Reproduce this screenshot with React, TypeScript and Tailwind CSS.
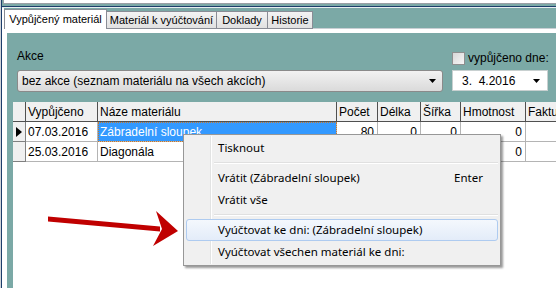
import React from "react";

const cols = [
  { w: 72, label: "Vypůjčeno" },
  { w: 239, label: "Náze materiálu" },
  { w: 41, label: "Počet" },
  { w: 43, label: "Délka" },
  { w: 40, label: "Šířka" },
  { w: 65, label: "Hmotnost" },
  { w: 70, label: "Fakturováno" },
];

const rows = [
  ["07.03.2016", "Zábradelní sloupek", "80", "0", "0", "0", ""],
  ["25.03.2016", "Diagonála", "0", "0", "0", "0", ""],
];

function DownArrow() {
  return (
    <svg width="8" height="4" viewBox="0 0 8 4" className="shrink-0">
      <path d="M0 0 L7 0 L3.5 4 Z" fill="#000" />
    </svg>
  );
}

function MenuItem({ label, shortcut, hot }: { label: string; shortcut?: string; hot?: boolean }) {
  return (
    <div className="h-[22px] px-[2px]">
      <div
        className={
          "h-full flex items-center rounded-[3px] border " +
          (hot
            ? "border-[#aecbf0] bg-gradient-to-b from-[#f4f8fd] to-[#e3ecf9]"
            : "border-transparent")
        }
      >
        <span className="pl-[31px] flex-1">{label}</span>
        {shortcut && <span className="w-[43px]">{shortcut}</span>}
      </div>
    </div>
  );
}

function Sep() {
  return (
    <div className="h-[8px] flex flex-col justify-center pl-[30px] pr-[2px]">
      <div className="h-[1px] bg-[#e0e0e0]" />
      <div className="h-[1px] bg-white" />
    </div>
  );
}

export default function App() {
  return (
    <div className="relative w-[556px] h-[288px] overflow-hidden bg-[#7ba9a6] font-['Liberation_Sans',Arial,sans-serif] text-[12px] text-black flex">
      <div className="w-[1px] shrink-0 bg-[#d0d4d8]" />
      <div className="w-[1px] shrink-0 bg-[#1d3e6b]" />
      <div className="flex-1 min-w-0 flex flex-col">
        {/* top strip */}
        <div className="h-[6px] shrink-0 pl-[1px]">
          <div className="h-[4px] bg-white border-b border-l border-[#9aa0a6]" />
        </div>
        <div className="h-[1px] shrink-0 bg-[#1d3e6b]" />
        <div className="h-[1px] shrink-0 bg-[#e8eef0]" />
        <div className="flex-1 min-h-0 flex">
          <div className="w-[2px] shrink-0 bg-white" />
          <div className="flex-1 min-w-0 flex flex-col">
            {/* tab strip */}
            <div className="h-[21px] shrink-0 flex items-end text-[11px]">
              <div className="h-[20px] w-[103px] shrink-0 bg-white border-t border-l border-r border-[#898c95] flex items-center justify-center">
                Vypůjčený materiál
              </div>
              <div className="h-[18px] w-[111px] shrink-0 -ml-[1px] bg-gradient-to-b from-[#f3f3f3] to-[#e1e1e1] border border-[#898c95] flex items-center justify-center">
                Materiál k vyúčtování
              </div>
              <div className="h-[18px] w-[52px] shrink-0 -ml-[1px] bg-gradient-to-b from-[#f3f3f3] to-[#e1e1e1] border border-[#898c95] flex items-center justify-center">
                Doklady
              </div>
              <div className="h-[18px] w-[46px] shrink-0 -ml-[1px] bg-gradient-to-b from-[#f3f3f3] to-[#e1e1e1] border border-[#898c95] flex items-center justify-center">
                Historie
              </div>
              <div className="flex-1 h-[1px] bg-[#c9cfd4]" />
            </div>
            {/* tab page */}
            <div className="flex-1 min-h-0 bg-white pt-[4px] pl-[3px] flex">
              <div className="flex-1 min-w-0 bg-[#7ba9a6] flex flex-col">
                <div className="flex pt-[16px] shrink-0">
                  <div className="ml-[10px] w-[426px] shrink-0 flex flex-col">
                    <div className="h-[14px] leading-[14px]">Akce</div>
                    <div className="mt-[7px] h-[22px] rounded-[3px] border border-[#8a8a8a] bg-gradient-to-b from-[#f2f2f2] to-[#dadada] flex items-center pl-[4px] pr-[5px]">
                      <span className="flex-1">bez akce (seznam materiálu na všech akcích)</span>
                      <DownArrow />
                    </div>
                  </div>
                  <div className="ml-[9px] w-[96px] shrink-0 flex flex-col">
                    <div className="mt-[3px] h-[13px] flex items-center whitespace-nowrap">
                      <div className="w-[13px] h-[13px] shrink-0 border border-[#8e8f8f] bg-gradient-to-br from-[#d8d8d8] to-[#f6f6f6]" />
                      <span className="ml-[3px] leading-[13px]">vypůjčeno dne:</span>
                    </div>
                    <div className="mt-[5px] h-[21px] bg-white border border-[#c8d0d0] flex items-center pl-[9px] pr-[6px]">
                      <span className="flex-1 whitespace-pre">3.  4.2016</span>
                      <DownArrow />
                    </div>
                  </div>
                </div>
                {/* grid */}
                <div className="mt-[10px] ml-[6px] flex-1 min-w-0 bg-white flex flex-col overflow-hidden">
                  <div className="h-[20px] flex shrink-0">
                    <div className="w-[13px] shrink-0 bg-[#f0f0f0] border-r border-b border-[#505050]" />
                    {cols.map((c) => (
                      <div
                        key={c.label}
                        style={{ width: c.w }}
                        className="shrink-0 bg-[#f0f0f0] border-r border-b border-[#505050] pl-[2px] flex items-center overflow-hidden whitespace-nowrap"
                      >
                        {c.label}
                      </div>
                    ))}
                  </div>
                  {rows.map((r, ri) => (
                    <div key={ri} className="h-[20px] flex shrink-0">
                      <div className="w-[13px] shrink-0 bg-[#f0f0f0] border-r border-b border-[#808080] flex items-center pl-[3px]">
                        {ri === 0 && (
                          <svg width="6" height="10" viewBox="0 0 6 10">
                            <path d="M0 0 L6 5 L0 10 Z" fill="#000" />
                          </svg>
                        )}
                      </div>
                      {cols.map((c, ci) => {
                        const sel = ri === 0 && ci === 1;
                        const num = ci >= 2;
                        return (
                          <div
                            key={ci}
                            style={{ width: c.w }}
                            className={
                              "shrink-0 border-r border-b border-[#b4b4b4] flex items-center overflow-hidden whitespace-nowrap " +
                              (num ? "justify-end pr-[3px] " : "pl-[2px] ") +
                              (sel ? "bg-[#3399ff] text-white outline-1 outline-dotted outline-[#c8782a] -outline-offset-1" : "")
                            }
                          >
                            {r[ci]}
                          </div>
                        );
                      })}
                    </div>
                  ))}
                </div>
              </div>
            </div>
          </div>
        </div>
      </div>

      {/* context menu */}
      <div className="absolute left-[183px] top-[134px] w-[318px] h-[132px] bg-[#f0f0f0] border border-[#979797] shadow-[2px_2px_2px_rgba(0,0,0,0.4)] font-['Noto_Sans',sans-serif] text-[11.5px] pt-[2px]">
        <div className="absolute left-[26px] top-[1px] bottom-[1px] w-[2px] flex">
          <div className="w-[1px] bg-[#e2e3e3]" />
          <div className="w-[1px] bg-white" />
        </div>
        <div className="relative">
          <MenuItem label="Tisknout" />
          <Sep />
          <MenuItem label="Vrátit (Zábradelní sloupek)" shortcut="Enter" />
          <MenuItem label="Vrátit vše" />
          <Sep />
          <MenuItem label="Vyúčtovat ke dni: (Zábradelní sloupek)" hot />
          <MenuItem label="Vyúčtovat všechen materiál ke dni:" />
        </div>
      </div>

      {/* red arrow */}
      <svg className="absolute left-0 top-0" width="556" height="288" viewBox="0 0 556 288">
        <path d="M48 216.5 L160 226.5 L160 231.5 L48 221.5 Z" fill="#c00000" />
        <path d="M156 211 L178 231 L153 246 L162 229 Z" fill="#c00000" />
      </svg>
    </div>
  );
}
